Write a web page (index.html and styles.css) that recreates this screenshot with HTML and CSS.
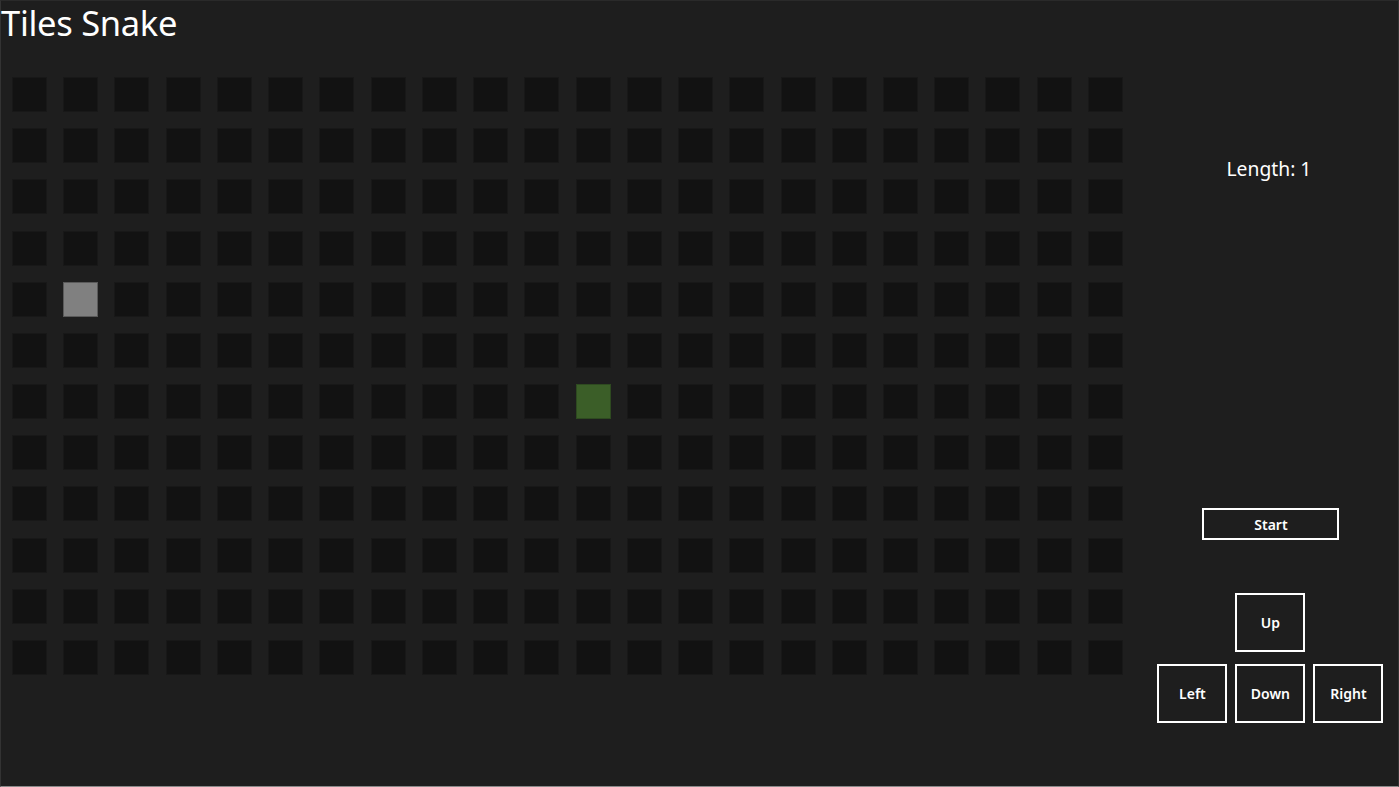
FILE: index.html
```html
<!DOCTYPE html>
<html lang="en">
<head>
  <meta charset="UTF-8"/>
  <title>Tiles Snake</title>
  <link rel="stylesheet" href="styles.css">
</head>
<body>
  <div class="page">
    <h1 class="title">Tiles Snake</h1>

    <div class="main">
      <!-- playing field, filled in by the script below -->
      <div id="board" class="board"></div>

      <div class="side">
        <div class="length">Length: <span id="len">1</span></div>
        <button class="btn start-btn">Start</button>
        <div class="pad">
          <button class="btn dir up">Up</button>
          <button class="btn dir left">Left</button>
          <button class="btn dir down">Down</button>
          <button class="btn dir right">Right</button>
        </div>
      </div>
    </div>
  </div>

  <script>
    const COLS=22, ROWS=12;
    const food={x:1,y:4}, head={x:11,y:6};
    const board=document.getElementById('board');
    for(let y=0;y<ROWS;y++){
      for(let x=0;x<COLS;x++){
        const t=document.createElement('div');
        t.className='tile';
        if(x===food.x&&y===food.y) t.classList.add('food');
        if(x===head.x&&y===head.y) t.classList.add('snake');
        board.appendChild(t);
      }
    }
  </script>
</body>
</html>
```

FILE: styles.css
```css
html,body{margin:0;padding:0;background:#1e1e1e}
body{font-family:'Noto Sans','Open Sans',sans-serif;color:#fff}
.page{box-sizing:border-box;height:787px;border:1px solid #333;border-bottom-color:#8a8a8a;
      border-top-color:#2a2a2a}
.title{margin:0;padding:0;font-size:34.5px;font-weight:400;line-height:44px;letter-spacing:-.3px}
.main{display:flex;margin-top:-2px}
.board{display:grid;grid-template-columns:repeat(22,35px);grid-auto-rows:35px;
       column-gap:16.24px;row-gap:16.18px;margin:34px 0 0 11px}
.tile{background:#121212;box-shadow:inset 0 0 0 1px #181818}
.tile.food{background:#808080;box-shadow:inset 0 0 0 1px #5a5a5a}
.tile.snake{background:#3b5e28;box-shadow:inset 0 0 0 1px #2e4a20}
.side{width:250px;margin-left:21px;display:flex;flex-direction:column;align-items:center}
.length{margin-top:113px;font-size:19.3px;line-height:26px;padding-left:0}
.btn{box-sizing:border-box;background:transparent;color:#fff;border:2px solid #fff;
     font-family:inherit;font-weight:600;font-size:14px;padding:0;cursor:pointer}
.start-btn{width:137px;height:32px;margin-top:326px;margin-left:4px}
.pad{display:grid;grid-template-columns:repeat(3,70px);grid-template-rows:59px 59px;
     column-gap:8px;row-gap:12px;margin-top:53px;margin-left:3px}
.dir{width:70px;height:59px}
.up{grid-column:2;grid-row:1}
.left{grid-column:1;grid-row:2}
.down{grid-column:2;grid-row:2}
.right{grid-column:3;grid-row:2}
```
